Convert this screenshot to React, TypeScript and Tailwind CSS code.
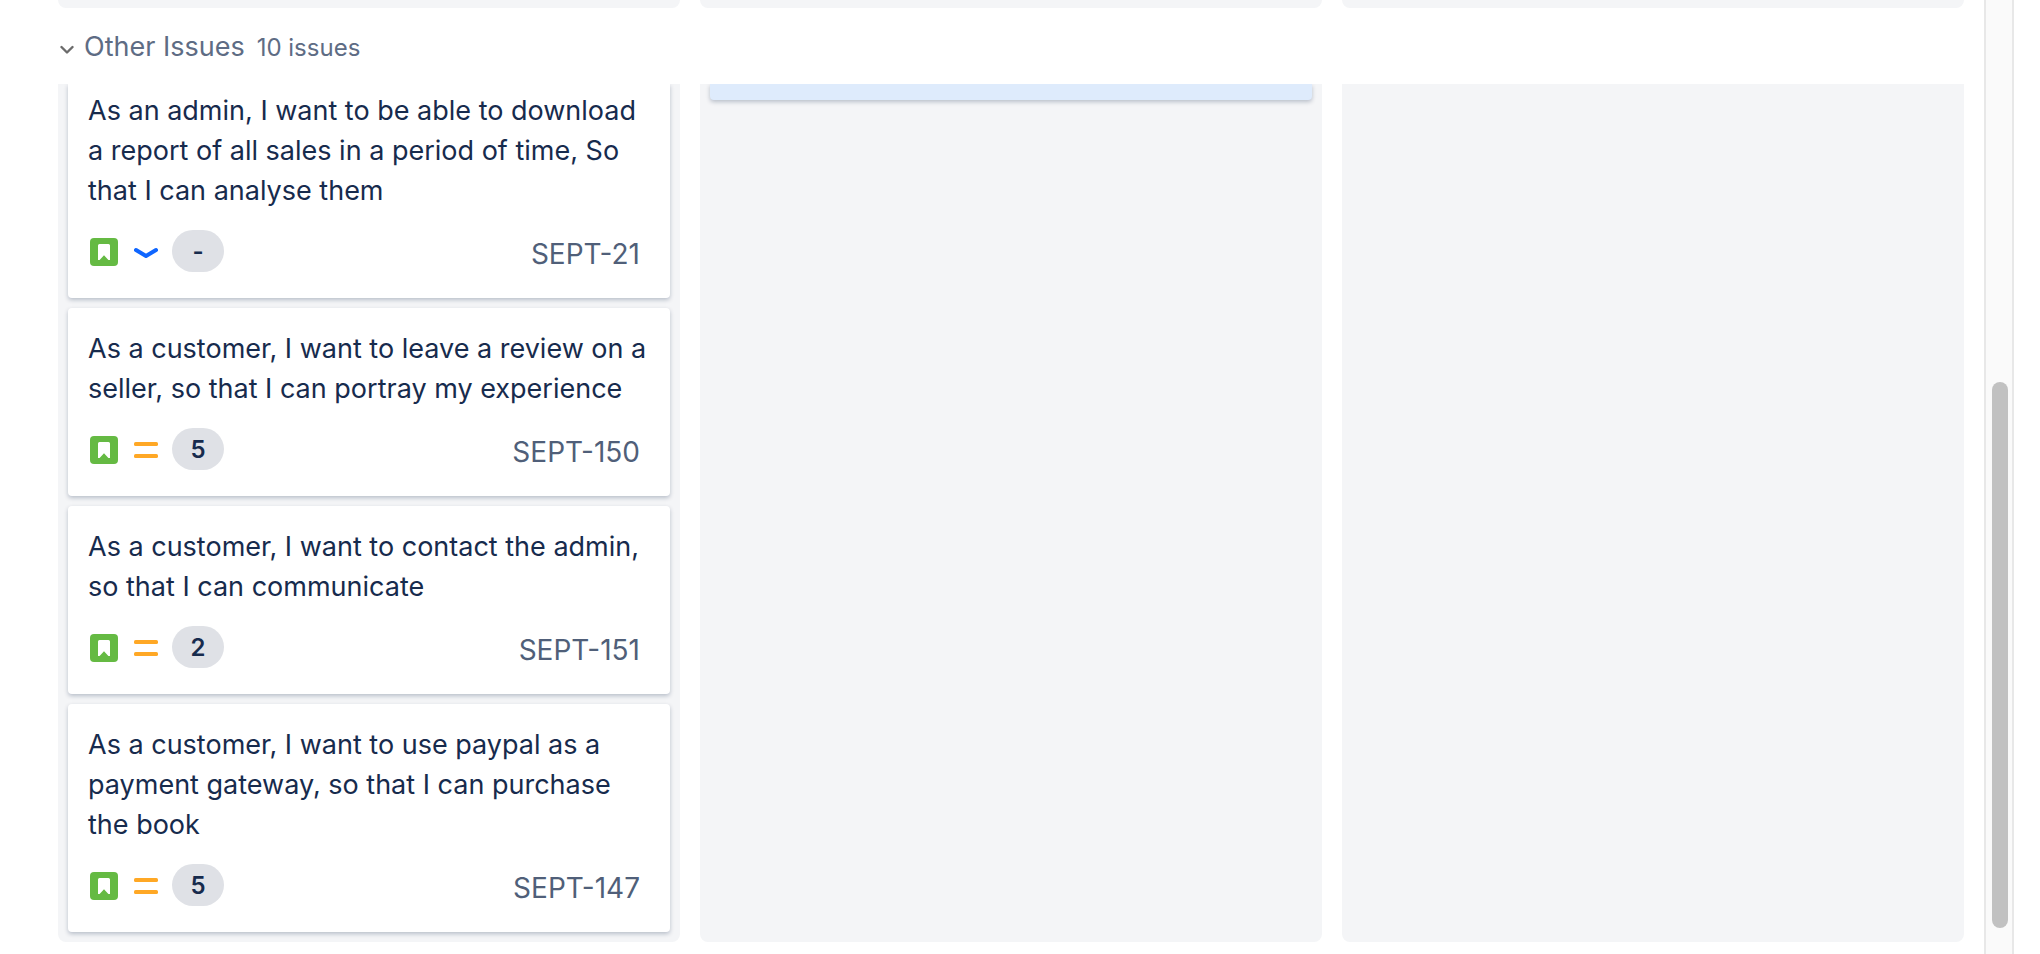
type Priority = "low" | "medium";

interface Issue {
  id: string;
  title: string;
  priority: Priority;
  points: string;
}

const issues: Issue[] = [
  {
    id: "SEPT-21",
    title:
      "As an admin, I want to be able to download a report of all sales in a period of time, So that I can analyse them",
    priority: "low",
    points: "-",
  },
  {
    id: "SEPT-150",
    title: "As a customer, I want to leave a review on a seller, so that I can portray my experience",
    priority: "medium",
    points: "5",
  },
  {
    id: "SEPT-151",
    title: "As a customer, I want to contact the admin, so that I can communicate",
    priority: "medium",
    points: "2",
  },
  {
    id: "SEPT-147",
    title: "As a customer, I want to use paypal as a payment gateway, so that I can purchase the book",
    priority: "medium",
    points: "5",
  },
];

function StoryIcon() {
  return (
    <svg width="28" height="28" viewBox="0 0 28 28" aria-hidden="true">
      <rect width="28" height="28" rx="4" fill="#65ba43" />
      <path d="M9.5 6h9A1.5 1.5 0 0 1 20 7.5V22h-1.6L14 17.2 9.6 22H8V7.5A1.5 1.5 0 0 1 9.5 6z" fill="#fff" />
    </svg>
  );
}

function PriorityIcon({ priority }: { priority: Priority }) {
  if (priority === "low") {
    return (
      <svg width="24" height="28" viewBox="0 0 24 28" fill="none" aria-hidden="true">
        <path
          d="M2 12l10 6 10-6"
          stroke="#0f66ff"
          strokeWidth="4"
          strokeLinecap="round"
          strokeLinejoin="round"
        />
      </svg>
    );
  }
  return (
    <svg width="24" height="28" viewBox="0 0 24 28" fill="#ffa825" aria-hidden="true">
      <rect y="6" width="24" height="4" rx="1.6" />
      <rect y="18" width="24" height="4" rx="1.6" />
    </svg>
  );
}

function IssueCard({ issue, clipped }: { issue: Issue; clipped: boolean }) {
  const edge = clipped ? "rounded-b pt-[7px]" : "rounded pt-[21px]";
  return (
    <article
      className={`${edge} bg-white px-5 pb-[26px] shadow-[0_2px_4px_0_rgba(9,30,66,0.25)]`}
    >
      <h3 className="text-[27px] leading-10 text-[#172b4d]">{issue.title}</h3>
      <div className="mt-[19px] flex items-center pl-0.5 pr-[10px]">
        <span className="flex items-center gap-4 pt-0.5">
          <StoryIcon />
          <PriorityIcon priority={issue.priority} />
        </span>
        <span className="ml-[14px] flex h-[42px] w-[52px] items-center justify-center rounded-full bg-[#dfe1e6] pt-0.5 text-2xl font-semibold text-[#172b4d]">
          {issue.points}
        </span>
        <a href={`#${issue.id}`} className="ml-auto pt-1.5 text-[28px] leading-9 text-[#505f79]">
          {issue.id}
        </a>
      </div>
    </article>
  );
}

export default function App() {
  return (
    <div className="flex min-h-screen bg-white font-['Inter','Liberation_Sans',sans-serif] pr-[26px]">
      <main className="min-w-0 flex-1 pl-[58px] pr-5 pb-3">
        <div className="grid grid-cols-3 gap-5">
          <div className="h-2 rounded-b-lg bg-[#f4f5f7]" />
          <div className="h-2 rounded-b-lg bg-[#f4f5f7]" />
          <div className="h-2 rounded-b-lg bg-[#f4f5f7]" />
        </div>

        <h2 className="flex h-[76px] items-center pt-0.5 text-[#5e6c84]">
          <button type="button" aria-expanded="true" className="flex items-baseline pl-0.5">
            <svg width="16" height="12" viewBox="0 0 16 12" fill="none" aria-hidden="true">
              <path
                d="M1.5 3l5.5 5.5L12.5 3"
                stroke="#6b6b6b"
                strokeWidth="2.4"
                strokeLinecap="round"
                strokeLinejoin="round"
              />
            </svg>
            <span className="ml-2 text-[27px] leading-10">Other Issues</span>
            <span className="ml-3 text-2xl">10 issues</span>
          </button>
        </h2>

        <div className="grid grid-cols-3 gap-5">
          <div className="flex flex-col gap-2.5 overflow-hidden rounded-b-lg bg-[#f4f5f7] px-2.5 pb-2.5">
            {issues.map((issue, i) => (
              <IssueCard key={issue.id} issue={issue} clipped={i === 0} />
            ))}
          </div>
          <div className="overflow-hidden rounded-b-lg bg-[#f4f5f7] px-2.5">
            <div className="h-4 rounded-b bg-[#deebfc] shadow-[0_2px_4px_0_rgba(9,30,66,0.25)]" />
          </div>
          <div className="rounded-b-lg bg-[#f4f5f7]" />
        </div>
      </main>

      <div className="flex w-[30px] flex-col border-x-2 border-[#e8e8e8] bg-[#fafafa] px-1.5 pt-[382px] pb-[26px]">
        <div className="mr-[-2px] w-4 flex-1 rounded-full bg-[#c1c1c1]" />
      </div>
    </div>
  );
}
